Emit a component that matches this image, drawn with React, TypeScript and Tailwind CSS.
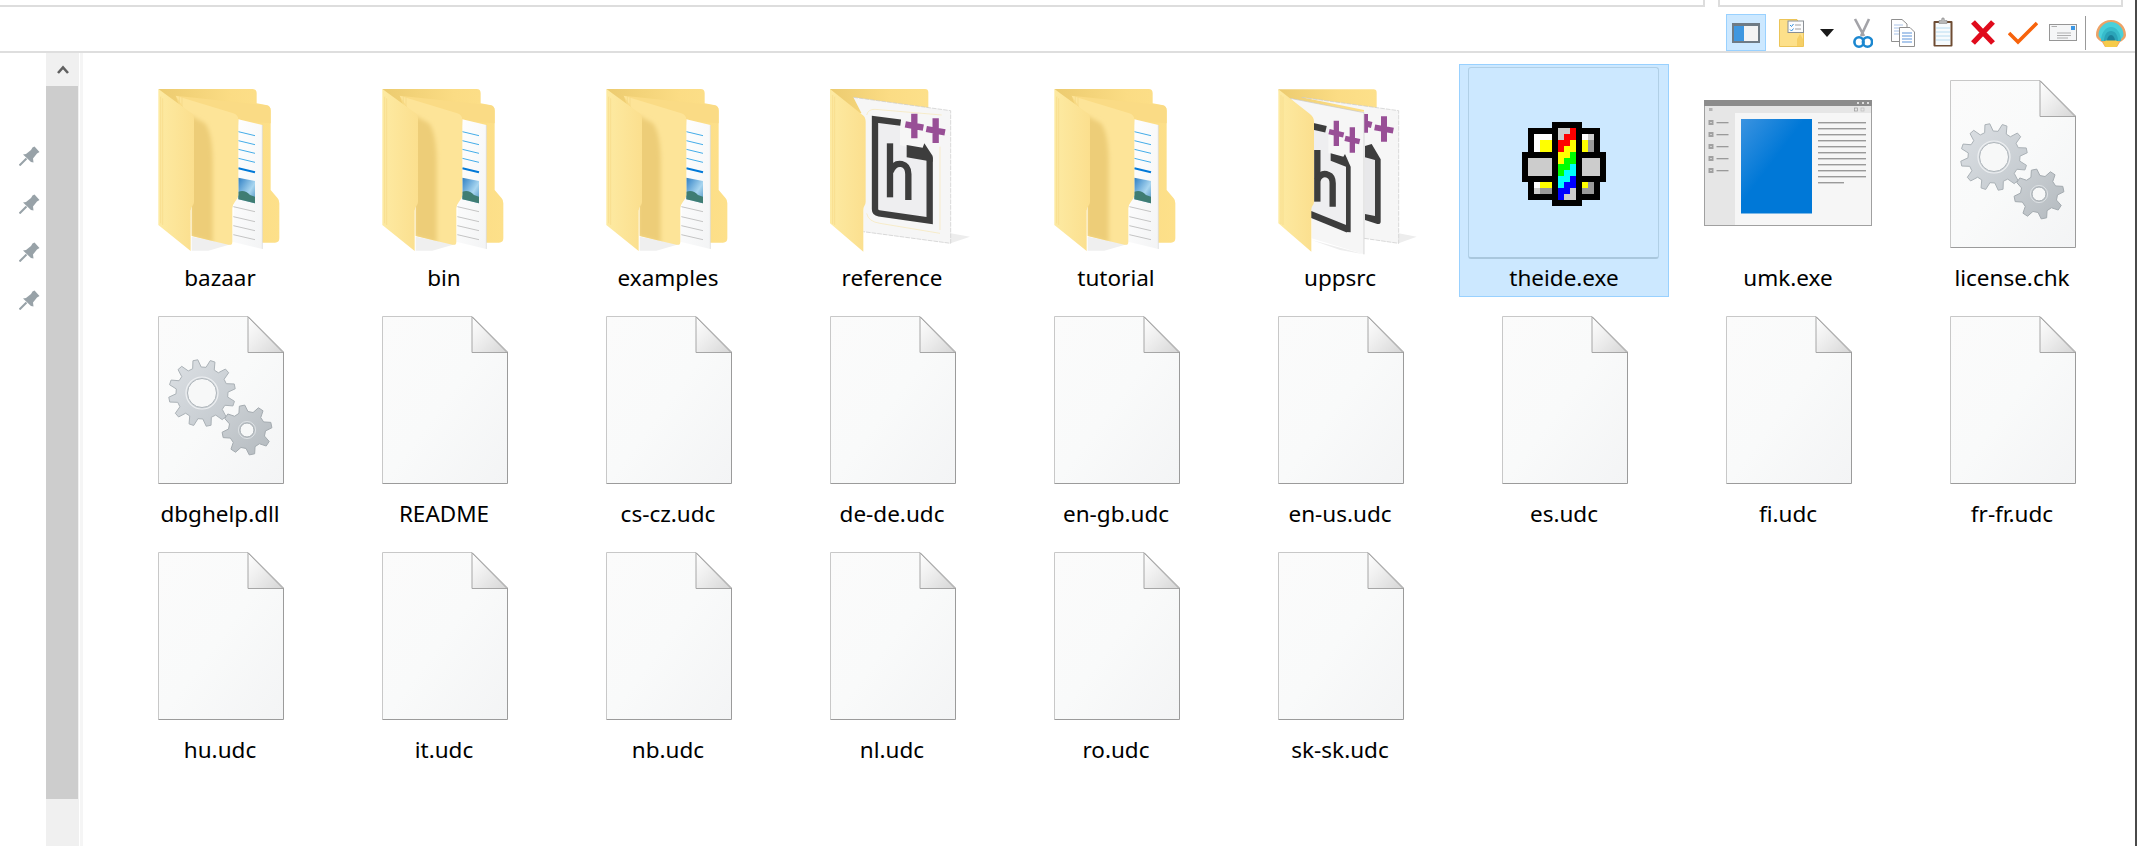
import React from "react";

type Kind = "folder" | "ref" | "upp" | "ide" | "win" | "gear" | "doc";

const items: { name: string; kind: Kind; selected?: boolean }[] = [
  { name: "bazaar", kind: "folder" },
  { name: "bin", kind: "folder" },
  { name: "examples", kind: "folder" },
  { name: "reference", kind: "ref" },
  { name: "tutorial", kind: "folder" },
  { name: "uppsrc", kind: "upp" },
  { name: "theide.exe", kind: "ide", selected: true },
  { name: "umk.exe", kind: "win" },
  { name: "license.chk", kind: "gear" },
  { name: "dbghelp.dll", kind: "gear" },
  { name: "README", kind: "doc" },
  { name: "cs-cz.udc", kind: "doc" },
  { name: "de-de.udc", kind: "doc" },
  { name: "en-gb.udc", kind: "doc" },
  { name: "en-us.udc", kind: "doc" },
  { name: "es.udc", kind: "doc" },
  { name: "fi.udc", kind: "doc" },
  { name: "fr-fr.udc", kind: "doc" },
  { name: "hu.udc", kind: "doc" },
  { name: "it.udc", kind: "doc" },
  { name: "nb.udc", kind: "doc" },
  { name: "nl.udc", kind: "doc" },
  { name: "ro.udc", kind: "doc" },
  { name: "sk-sk.udc", kind: "doc" },
];

function gearPath(cx: number, cy: number, ro: number, ri: number, n: number) {
  const pts: string[] = [];
  const step = (Math.PI * 2) / n;
  for (let i = 0; i < n; i++) {
    const a = i * step - 0.2;
    const p = (r: number, t: number) =>
      `${(cx + r * Math.cos(a + t * step)).toFixed(2)} ${(cy + r * Math.sin(a + t * step)).toFixed(2)}`;
    pts.push(p(ri, -0.32), p(ro, -0.14), p(ro, 0.14), p(ri, 0.32));
  }
  return "M" + pts.join("L") + "Z";
}

const MID_FLAP =
  "M77 47 L250 100 Q265 105 265 120 V345 Q265 355 255 365 Q247 375 247 385 V485 Q247 497 235 494 L125 468 L125 120 Z";

function Defs() {
  return (
    <svg className="absolute w-0 h-0">
      <defs>
        <linearGradient id="fback" x1="0" y1="0" x2="1" y2="0">
          <stop offset="0" stopColor="#eccb6f" />
          <stop offset="0.6" stopColor="#fbdc84" />
          <stop offset="1" stopColor="#fde08a" />
        </linearGradient>
        <linearGradient id="fleft" x1="0" y1="0" x2="1" y2="0">
          <stop offset="0" stopColor="#fdeaa2" />
          <stop offset="1" stopColor="#fbdf8e" />
        </linearGradient>
        <linearGradient id="paper" x1="0" y1="0" x2="1" y2="1">
          <stop offset="0" stopColor="#ffffff" />
          <stop offset="1" stopColor="#f3f4f5" />
        </linearGradient>
        <linearGradient id="doc" x1="0" y1="0" x2="1" y2="1">
          <stop offset="0" stopColor="#fbfbfb" />
          <stop offset="0.5" stopColor="#f9fafa" />
          <stop offset="1" stopColor="#f3f4f5" />
        </linearGradient>
        <linearGradient id="fold" x1="0" y1="0" x2="1" y2="1">
          <stop offset="0" stopColor="#ffffff" />
          <stop offset="0.5" stopColor="#ececec" />
          <stop offset="1" stopColor="#d6d6d6" />
        </linearGradient>
        <linearGradient id="gear1" x1="0" y1="0" x2="1" y2="1">
          <stop offset="0" stopColor="#dce0e4" />
          <stop offset="1" stopColor="#c2c8cd" />
        </linearGradient>
        <linearGradient id="gear2" x1="0" y1="0" x2="1" y2="1">
          <stop offset="0" stopColor="#ccd1d5" />
          <stop offset="1" stopColor="#b4babf" />
        </linearGradient>
        <linearGradient id="blue" x1="0" y1="0" x2="1" y2="1">
          <stop offset="0" stopColor="#3b93e0" />
          <stop offset="0.45" stopColor="#0078d7" />
          <stop offset="1" stopColor="#0078d7" />
        </linearGradient>
        <linearGradient id="sky" x1="0" y1="0" x2="1" y2="1">
          <stop offset="0" stopColor="#2e7fc4" />
          <stop offset="0.6" stopColor="#a9d6f0" />
          <stop offset="1" stopColor="#4a8fc0" />
        </linearGradient>
        <filter id="soft" x="-30%" y="-30%" width="160%" height="160%">
          <feGaussianBlur stdDeviation="7" />
        </filter>
        <clipPath id="midclip">
          <path d={MID_FLAP} />
        </clipPath>
      </defs>
    </svg>
  );
}

function Folder() {
  return (
    <g transform="translate(35 16) scale(0.33333)">
      <path d="M125 470 L245 492 L175 512 L125 512Z" fill="#efefef" />
      <path
        d="M25 27 H308 Q320 27 320 40 V70 L348 75 Q362 78 362 92 V330 L383 355 Q388 360 388 370 V475 Q388 488 375 488 L330 488 V300 L100 100Z"
        fill="url(#fback)"
      />
      <path d="M77 47 L350 76 Q362 78 362 92 V130 L100 110Z" fill="#fadb85" />
      <path d="M265 118 L337 135 V507 L247 485Z" fill="url(#paper)" />
      <path d="M337 135 V507" stroke="#d8d8d8" strokeWidth="2" />
      {[155, 182, 208, 235].map((y) => (
        <path key={y} d={`M265 ${y} L315 ${y + 12}`} stroke="#43ace8" strokeWidth="3" />
      ))}
      <path d="M265 265 L315 277" stroke="#0078d7" strokeWidth="6" />
      <path d="M265 293 L315 303 V370 L265 358Z" fill="url(#sky)" />
      <path d="M265 335 Q285 328 300 345 L315 350 V370 L265 358Z" fill="#3f7d73" />
      {[365, 395, 422, 449].map((y) => (
        <path key={y} d={`M250 ${y + 15} L315 ${y + 30}`} stroke="#c4c4c4" strokeWidth="3" />
      ))}
      <path d={MID_FLAP} fill="#fde498" />
      <g clipPath="url(#midclip)">
        <path
          d="M120 105 L165 130 Q188 160 188 250 V490 L120 470Z"
          fill="#edcd78"
          filter="url(#soft)"
        />
      </g>
      <path d="M88 50 V90 M96 52 V90" stroke="#f3d684" strokeWidth="2" />
      <path
        d="M25 27 L125 100 Q132 105 132 118 V365 Q132 372 127 378 Q122 385 122 392 V513 L25 435 Z"
        fill="url(#fleft)"
      />
      <path d="M32 50 V430 M38 55 V435" stroke="#f6da88" strokeWidth="2" />
    </g>
  );
}

function Plus({ cx, cy, w, h, t = 19 }: { cx: number; cy: number; w: number; h: number; t?: number }) {
  return (
    <path
      d={`M${cx - w / 2} ${cy - 5} L${cx + w / 2} ${cy + 5} M${cx} ${cy - h / 2} V${cy + h / 2}`}
      stroke="#984f96"
      strokeWidth={t}
      fill="none"
    />
  );
}

function RefFolder() {
  return (
    <g transform="translate(13 6) scale(0.33333)">
      <path d="M190 485 L452 520 L510 500 L452 490Z" fill="#ededed" />
      <path d="M90 57 H375 Q385 57 385 67 V130 H160 V300 L120 200Z" fill="url(#fback)" />
      <path d="M160 82 L452 122 V520 L190 485 L190 140Z" fill="#f6f6f6" />
      <path d="M160 82 L452 122 V520 L190 485" fill="none" stroke="#c9c9c9" strokeWidth="2" strokeDasharray="14 3" />
      <path
        d="M200 430 Q205 455 240 460 L420 490 M200 135 Q205 117 225 118 L425 135 M420 230 V480"
        fill="none"
        stroke="#f7e7b4"
        strokeWidth="2"
      />
      <path d="M223 147 L300 157 V225 L390 250 V453 L235 430 L223 418Z" fill="#eeeef0" />
      <path
        d="M302 158 L225 148 V418 Q225 428 237 430 L389 452 V262"
        fill="none"
        stroke="#3d3d3d"
        strokeWidth="19"
      />
      <path d="M320 225 L368 233 L373 220 L398 258 V275 L320 262Z" fill="#3d3d3d" />
      <path d="M270 220 V382" stroke="#3d3d3d" strokeWidth="19" />
      <path
        d="M272 305 Q282 278 305 282 Q325 287 325 312 V390"
        fill="none"
        stroke="#3d3d3d"
        strokeWidth="19"
      />
      <Plus cx={343} cy={168} w={54} h={74} />
      <Plus cx={407} cy={182} w={56} h={74} />
      <path
        d="M90 57 L188 135 Q197 142 197 155 V395 Q197 402 193 408 Q190 413 190 420 V545 L90 460 Z"
        fill="url(#fleft)"
      />
      <path d="M98 75 V462 M104 80 V465" stroke="#f6da88" strokeWidth="2" />
    </g>
  );
}

function UppFolder() {
  return (
    <g transform="translate(25 6) scale(0.33333)">
      <path d="M312 505 L416 520 L470 500 L416 490Z" fill="#ededed" />
      <path d="M155 510 L312 553 L240 540Z" fill="#ededed" />
      <path d="M55 58 H340 Q350 58 350 68 V125 H125 V300Z" fill="url(#fback)" />
      <path d="M125 82 L416 122 V520 L312 505 V120Z" fill="#f6f6f6" />
      <path d="M125 82 L416 122 V520 L312 505" fill="none" stroke="#c9c9c9" strokeWidth="2" strokeDasharray="14 3" />
      <path d="M315 238 H345 V445 L315 438Z" fill="#e8e8ea" />
      <path d="M315 228 L335 222 L362 268 V455 Q362 463 352 462 L315 450 V432 L345 438 V270 L315 262Z" fill="#3d3d3d" />
      <Plus cx={315} cy={160} w={40} h={56} t={18} />
      <Plus cx={372} cy={177} w={56} h={76} t={18} />
      <path d="M90 85 L312 128 V553 L155 505 V150Z" fill="#f6f6f6" />
      <path d="M90 85 L312 128 V553" fill="none" stroke="#c9c9c9" strokeWidth="2" />
      <path d="M150 160 L205 172 V250 L265 262 V480 L150 430Z" fill="#eeeef0" />
      <path d="M155 168 L198 178" stroke="#3d3d3d" strokeWidth="20" />
      <path d="M212 250 L250 260 L255 252 L272 290 V487 L258 486 V290 L212 272Z" fill="#3d3d3d" />
      <path d="M150 432 L264 478" stroke="#3d3d3d" strokeWidth="20" />
      <path d="M172 240 V395" stroke="#3d3d3d" strokeWidth="19" />
      <path d="M172 330 Q185 305 205 315 Q218 320 218 340 V410" fill="none" stroke="#3d3d3d" strokeWidth="19" />
      <Plus cx={229} cy={190} w={44} h={76} t={16} />
      <Plus cx={277} cy={210} w={44} h={76} t={16} />
      <path
        d="M55 58 L150 132 Q162 142 162 155 V395 Q162 402 157 408 Q154 413 154 420 V545 L55 460 Z"
        fill="url(#fleft)"
      />
      <path d="M63 75 V462 M69 80 V465" stroke="#f6da88" strokeWidth="2" />
    </g>
  );
}

function Doc({ gears }: { gears?: boolean }) {
  return (
    <g transform="translate(43 16)">
      <path d="M0.5 0.5 H90 L125.5 36 V167.5 H0.5Z" fill="url(#doc)" />
      <path d="M0.5 167.5 V0.5 H90" fill="none" stroke="#c8c8c8" strokeWidth="1" />
      <path d="M90 0.5 L125.5 36 V167.5 H0.5" fill="none" stroke="#9b9b9b" strokeWidth="1" />
      <path d="M90 1 V36.5 H125Z" fill="url(#fold)" stroke="#a6a6a6" strokeWidth="1" />
      {gears && (
        <>
          <path d={gearPath(44, 77, 33.5, 26, 12)} fill="url(#gear1)" stroke="#abb2b7" strokeWidth="1" />
          <circle cx="44" cy="77" r="14.5" fill="#f7f8f8" stroke="#aeb5ba" strokeWidth="1" />
          <circle cx="44" cy="77" r="16" fill="none" stroke="#eef0f2" strokeWidth="1.2" />
          <path d={gearPath(89, 114, 25, 18.5, 8)} fill="url(#gear2)" stroke="#a4abb0" strokeWidth="1" />
          <circle cx="89" cy="114" r="7" fill="#f7f8f8" stroke="#a4abb0" strokeWidth="1" />
          <circle cx="89" cy="114" r="8.6" fill="none" stroke="#dde1e4" strokeWidth="1" />
        </>
      )}
    </g>
  );
}

const IDE = [
  ".....KKKKK....",
  ".KKKKKggrKKKK.",
  ".KwwwKgrrKwgK.",
  ".KwyyKrryKydK.",
  ".KwyyKryyKydK.",
  "KKKKKKyyeKKKKK",
  "KggggKyeeKgggK",
  "KggggKeecKgggK",
  "KggggKeccKgggK",
  "KKKKKKccbKKKKK",
  ".KwyyKcbbKydK.",
  ".KgddKbbgKddK.",
  ".KKKKKbggKKKK.",
  ".....KKKKK....",
];
const IDE_COL: Record<string, string> = {
  K: "#000000",
  g: "#cccccc",
  r: "#ff0000",
  w: "#ffffff",
  y: "#ffff00",
  d: "#999999",
  e: "#00ff00",
  c: "#00ffff",
  b: "#0000ff",
};

function Ide() {
  return (
    <g transform="translate(63 58)" shapeRendering="crispEdges">
      {IDE.flatMap((row, r) =>
        row.split("").map((ch, c) =>
          ch === "." ? null : (
            <rect key={`${r}-${c}`} x={c * 6} y={r * 6} width="6" height="6" fill={IDE_COL[ch]} />
          ),
        ),
      )}
    </g>
  );
}

function Win() {
  const lines = [0, 1, 2, 3, 4, 5, 6, 7, 8, 9];
  return (
    <g transform="translate(21 36)">
      <rect x="0.5" y="0.5" width="167" height="125" fill="#f6f6f6" stroke="#a0a0a0" />
      <rect x="0" y="0" width="168" height="6" fill="#8c8c8c" />
      <rect x="1" y="6" width="166" height="7" fill="#e6e6e6" />
      <rect x="1" y="13" width="30" height="112" fill="#e6e6e6" />
      <rect x="37" y="19" width="71" height="94.5" fill="url(#blue)" />
      {lines.map((i) => (
        <rect key={i} x="114" y={22 + i * 6} width="48" height="1.4" fill="#9a9a9a" />
      ))}
      <rect x="114" y="82" width="26" height="1.4" fill="#9a9a9a" />
      {[0, 1, 2, 3, 4].map((i) => (
        <g key={i}>
          <rect x="4.5" y={20 + i * 12} width="5" height="5" fill="#a0a0a0" />
          <rect x="6.5" y={22 + i * 12} width="1" height="1" fill="#ffffff" />
          <rect x="12.5" y={22 + i * 12} width="12" height="1.3" fill="#9a9a9a" />
        </g>
      ))}
      <rect x="5" y="8" width="3.5" height="3" fill="#b4b4b4" />
      <rect x="150.5" y="8" width="3" height="3" fill="none" stroke="#999" strokeWidth="0.7" />
      <rect x="157" y="8" width="3" height="3" fill="none" stroke="#bbb" strokeWidth="0.7" />
      <rect x="153" y="2" width="2" height="2" fill="#ddd" />
      <rect x="158" y="2" width="2" height="2" fill="#ddd" />
      <rect x="163" y="2" width="2" height="2" fill="#ddd" />
    </g>
  );
}

function Icon({ kind }: { kind: Kind }) {
  return (
    <svg width="210" height="196" viewBox="0 0 210 196" className="block">
      {kind === "folder" && <Folder />}
      {kind === "ref" && <RefFolder />}
      {kind === "upp" && <UppFolder />}
      {kind === "ide" && <Ide />}
      {kind === "win" && <Win />}
      {kind === "gear" && <Doc gears />}
      {kind === "doc" && <Doc />}
    </svg>
  );
}

function Item({ name, kind, selected }: { name: string; kind: Kind; selected?: boolean }) {
  return (
    <div
      className={
        "relative flex flex-col items-center h-[233px] " +
        (selected ? "bg-[#cce8ff] shadow-[inset_0_0_0_1px_#99d1ff]" : "")
      }
    >
      {selected && (
        <div className="absolute left-[9px] top-[3px] w-[191px] h-[192px] rounded-[3px] border border-[#b0cfe6] border-b-2 border-b-[#a9c7dd]" />
      )}
      <Icon kind={kind} />
      <div className="relative mt-[4px] h-[28px] text-[22.5px] leading-[28px] text-black whitespace-nowrap font-['Noto_Sans',sans-serif]">
        {name}
      </div>
    </div>
  );
}

function Pin() {
  return (
    <svg width="21" height="20" viewBox="0 0 21 20" className="block">
      <path d="M15.5 0.5 L20.5 6 L18 7.5 L14 12.5 L14.5 16.5 L12 16 L4 8.5 L7 8 L12 4 L13.5 1.5Z" fill="#98a2a8" />
      <path d="M0.5 19.5 L7.5 12.5" stroke="#98a2a8" strokeWidth="2" />
    </svg>
  );
}

function ToolIcon({ w, ml, children }: { w: number; ml: number; children: React.ReactNode }) {
  return (
    <svg
      width={w}
      height="44"
      viewBox={`0 0 ${w} 44`}
      className="block shrink-0"
      style={{ marginLeft: ml }}
    >
      {children}
    </svg>
  );
}

function Toolbar() {
  return (
    <div className="flex justify-end h-[44px] pr-[11px]">
      <div className="self-end h-[37px] w-[40px] bg-[#cce8ff] border border-[#99d1ff] flex justify-center">
        <svg width="28" height="20" viewBox="0 0 28 20" className="block mt-[8px]">
          <rect x="0" y="0" width="28" height="20" fill="#6f7b85" />
          <rect x="2" y="3" width="10" height="15" fill="#3f97e0" />
          <rect x="12" y="3" width="14" height="15" fill="#f4f4f4" />
        </svg>
      </div>
      <ToolIcon w={25} ml={13}>
        <path d="M0.5 12.5 H18 V13 L24.5 20 V39.5 H0.5Z" fill="#fde08a" stroke="#ecc558" />
        <path d="M18 32 L21 27 L24 32 V39 H18Z" fill="#f6cf66" />
        <rect x="9" y="14" width="15.5" height="11.5" fill="#fbfcfd" stroke="#8a8f94" />
        <path d="M11 18 L12.5 19.5 L14.5 17 M11 22.5 L12.5 24 L14.5 21.5" fill="none" stroke="#2f8fdc" strokeWidth="1" />
        <path d="M16 18 H22 M16 22 H22" stroke="#a0a0a0" strokeWidth="1" />
      </ToolIcon>
      <ToolIcon w={14} ml={16}>
        <path d="M0 22 H14 L7 30Z" fill="#1a1a1a" />
      </ToolIcon>
      <ToolIcon w={20} ml={19}>
        <path d="M2 12 L11 29 M16 12 L8 29" stroke="#a3a3a8" strokeWidth="2.6" fill="none" />
        <ellipse cx="6" cy="35" rx="4.6" ry="4.8" fill="none" stroke="#1b87d0" strokeWidth="2.6" />
        <ellipse cx="14.5" cy="35" rx="4.6" ry="4.8" fill="none" stroke="#1b87d0" strokeWidth="2.6" />
      </ToolIcon>
      <ToolIcon w={24} ml={18}>
        <path d="M0.5 12.5 H11 L16 17 V34.5 H0.5Z" fill="#fff" stroke="#8f8f8f" />
        <path d="M3 18 H12 M3 21 H12 M3 24 H12 M3 27 H8" stroke="#a9c3e8" strokeWidth="1" />
        <path d="M8.5 20.5 H19 L23.5 25 V39.5 H8.5Z" fill="#fff" stroke="#8f8f8f" />
        <path d="M11 26 H21 M11 29 H21 M11 32 H21 M11 35 H21" stroke="#5d93d9" strokeWidth="1.2" />
      </ToolIcon>
      <ToolIcon w={20} ml={18}>
        <rect x="0.5" y="14" width="19" height="25.5" rx="1" fill="#6e4c33" />
        <rect x="2.5" y="16" width="15" height="22" fill="#f7fbfd" />
        <path d="M3 21 H17 M3 25 H17 M3 29 H17 M3 33 H17" stroke="#b9dcf0" strokeWidth="1" />
        <path d="M6 16 V13.5 H8.5 L9 11 H11 L11.5 13.5 H14 V16.5 H6Z" fill="#b8b8b8" stroke="#8c8c8c" strokeWidth="0.6" />
      </ToolIcon>
      <ToolIcon w={26} ml={17}>
        <path d="M3 15 L23 36 M23 15 L3 36" stroke="#e00b1c" strokeWidth="5.4" fill="none" />
      </ToolIcon>
      <ToolIcon w={30} ml={12}>
        <path d="M1 26 L10 35 L29 16" stroke="#f7630c" strokeWidth="3.6" fill="none" />
      </ToolIcon>
      <ToolIcon w={28} ml={11}>
        <rect x="0.5" y="17.5" width="27" height="16" fill="#f5f6f7" stroke="#969696" />
        <rect x="22" y="19" width="4" height="4" fill="#3a96e4" />
        <path d="M8 26 H22 M8 28.5 H22 M8 31 H19" stroke="#a6a6a6" strokeWidth="0.9" />
        <path d="M2.5 19.5 H8" stroke="#a6a6a6" strokeWidth="0.9" />
      </ToolIcon>
      <div className="ml-[8px] mt-[9px] w-px h-[34px] bg-[#999999]" />
      <ToolIcon w={30} ml={10}>
        <path
          d="M15 13 C6 13 0 20 0 28 C0 31 3 33.5 6 35 L9 40 H21 L24 35 C27 33.5 30 31 30 28 C30 20 24 13 15 13Z"
          fill="#eda266"
        />
        <path d="M15 15 C8 15 2.5 21 2.5 28 C2.5 30 5 32 7 34 H23 C25 32 27.5 30 27.5 28 C27.5 21 22 15 15 15Z" fill="#4ad0da" />
        <path d="M5 34 C5 26 9.5 20 15 20 C20.5 20 25 26 25 34Z" fill="#38bccb" />
        <path d="M8 34 C8 28 11 24 15 24 C19 24 22 28 22 34Z" fill="#2aa3b8" />
        <path d="M11 34 C11 31 13 28 15 28 C17 28 19 31 19 34Z" fill="#1a7f98" />
        <path d="M7 35 L9.5 40 H20.5 L23 35 L20 33.5 H10Z" fill="#f6cb4a" />
      </ToolIcon>
    </div>
  );
}

export default function App() {
  return (
    <div className="relative w-[2137px] h-[846px] bg-white overflow-hidden">
      <Defs />
      <div className="flex h-[7px]">
        <div className="w-[1705px] border-r-2 border-b-2 border-[#dddddd]" />
        <div className="ml-[13px] w-[405px] border-x-2 border-b-2 border-[#dddddd]" />
      </div>
      <Toolbar />
      <div className="h-[2px] mr-[2px] bg-[#dedede]" />
      <div className="flex h-[793px]">
        <div className="w-[46px] shrink-0 pt-[93px] pl-[19px] flex flex-col gap-[28px]">
          <Pin />
          <Pin />
          <Pin />
          <Pin />
        </div>
        <div className="w-[33px] shrink-0 flex flex-col bg-[#f0f0f0]">
          <div className="h-[33px] flex items-center justify-center shrink-0">
            <svg width="12" height="9" viewBox="0 0 12 9">
              <path d="M1 8 L6 2.5 L11 8" fill="none" stroke="#606060" strokeWidth="2.6" />
            </svg>
          </div>
          <div className="h-[713px] w-[32px] bg-[#cdcdcd]" />
        </div>
        <div className="ml-px w-[3px] shrink-0 bg-[#f5f5f5]" />
        <div className="pl-[32px] pt-[11px]">
          <div className="grid grid-cols-[repeat(9,210px)] gap-x-[14px] gap-y-[3px]">
            {items.map((it) => (
              <Item key={it.name} {...it} />
            ))}
          </div>
        </div>
      </div>
      <div className="absolute right-0 top-0 w-[2px] h-full bg-[#4a4a4a]" />
    </div>
  );
}
